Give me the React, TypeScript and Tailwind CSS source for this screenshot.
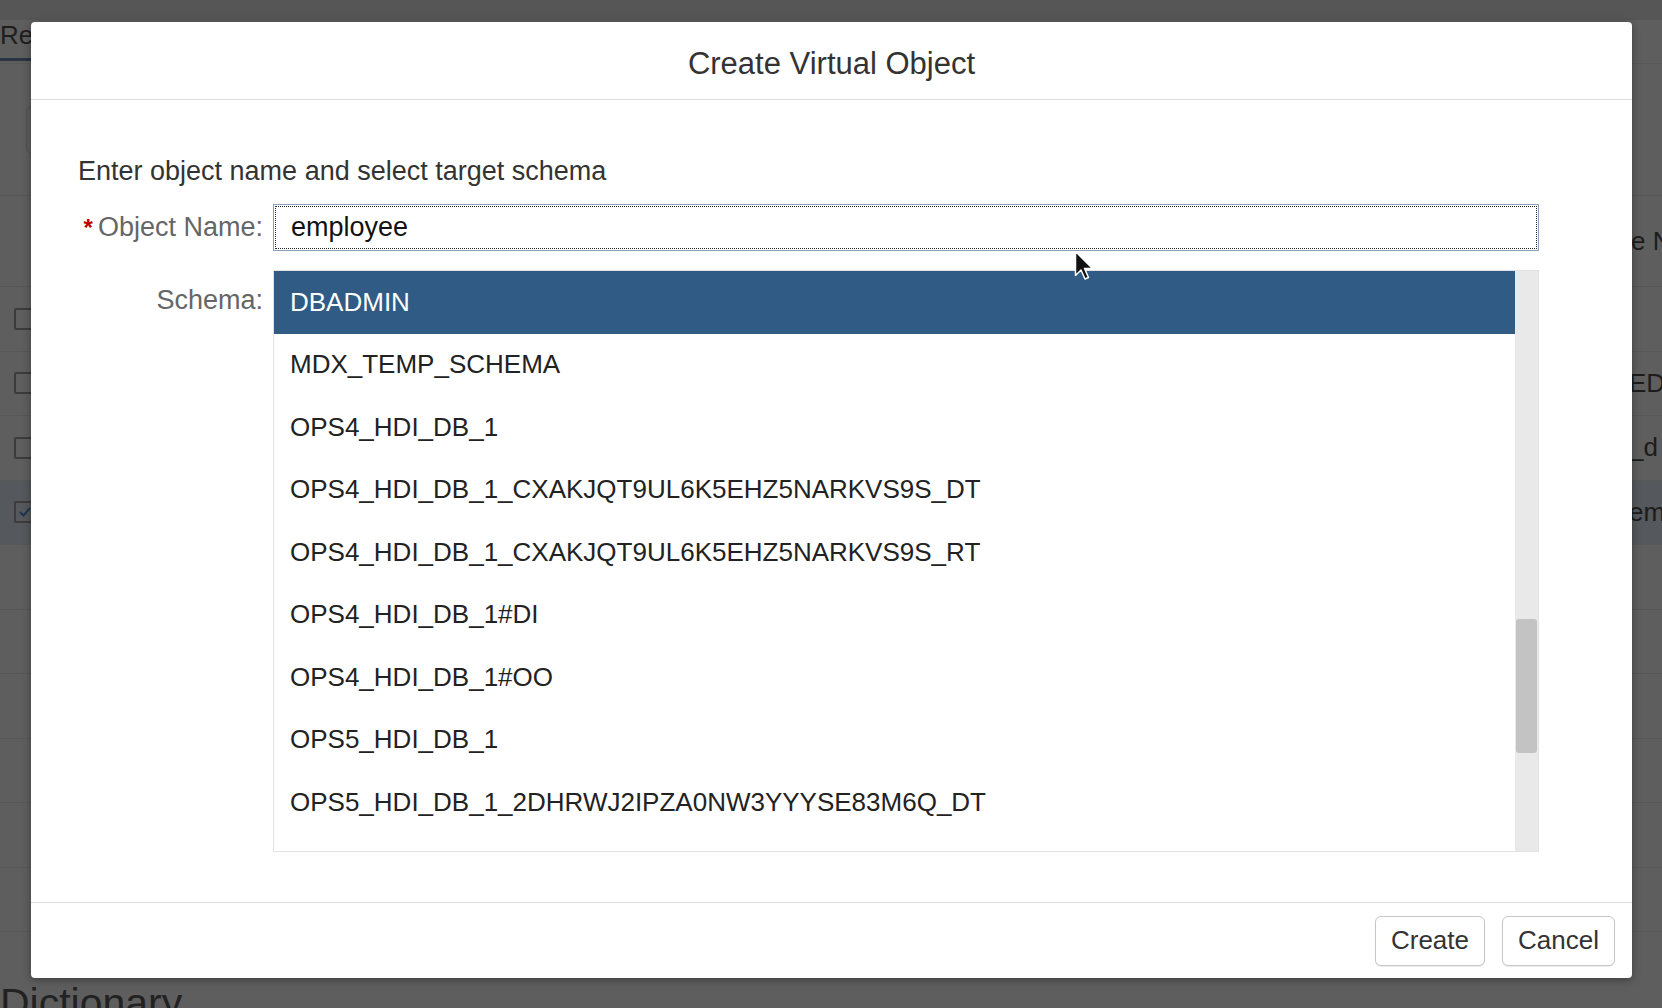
import { ReactNode } from 'react';

const schemas = [
  'DBADMIN',
  'MDX_TEMP_SCHEMA',
  'OPS4_HDI_DB_1',
  'OPS4_HDI_DB_1_CXAKJQT9UL6K5EHZ5NARKVS9S_DT',
  'OPS4_HDI_DB_1_CXAKJQT9UL6K5EHZ5NARKVS9S_RT',
  'OPS4_HDI_DB_1#DI',
  'OPS4_HDI_DB_1#OO',
  'OPS5_HDI_DB_1',
  'OPS5_HDI_DB_1_2DHRWJ2IPZA0NW3YYYSE83M6Q_DT',
  'OPS5_HDI_DB_1_2DHRWJ2IPZA0NW3YYYSE83M6Q_RT',
];

// rows of the table behind the overlay; only their edges show past the dialog
const rows = [
  { box: true, checked: false, tail: '', selected: false },
  { box: true, checked: false, tail: 'ED', selected: false },
  { box: true, checked: false, tail: '_d', selected: false },
  { box: true, checked: true, tail: 'em', selected: true },
  { box: false, checked: false, tail: '', selected: false },
  { box: false, checked: false, tail: '', selected: false },
  { box: false, checked: false, tail: '', selected: false },
  { box: false, checked: false, tail: '', selected: false },
  { box: false, checked: false, tail: '', selected: false },
  { box: false, checked: false, tail: '', selected: false },
];

function Checkbox({ checked }: { checked: boolean }) {
  return (
    <span className="ml-[14px] flex h-[22px] w-[22px] items-center justify-center rounded-[2px] border-2 border-[#3c3c3c]">
      {checked && (
        <svg width="14" height="14" viewBox="0 0 14 14" className="text-[#1f3550]">
          <path d="M2 7l3.5 3.5L12 3" fill="none" stroke="currentColor" strokeWidth="2" />
        </svg>
      )}
    </span>
  );
}

function Button({ children, w }: { children: ReactNode; w: string }) {
  return (
    <button className={`flex h-[50px] ${w} items-center justify-center rounded-[6px] border border-[#c6c6c6] bg-white text-[26px] text-[#333] shadow-[0_1px_1px_rgba(0,0,0,0.08)]`}>
      {children}
    </button>
  );
}

export default function App() {
  return (
    <div className="relative h-screen w-full overflow-hidden bg-[#5e5e5e] font-['Liberation_Sans',Arial,sans-serif] text-[#1c1c1c]">
      {/* page behind the modal overlay */}
      <div className="h-[20px] bg-[#565656]" />
      <div className="flex h-[44px] items-start border-b border-[#585858]">
        <span className="border-b-[3px] border-[#2a3442] pb-[8px] text-[26px] leading-[30px] text-[#1e1e1e]">Re</span>
      </div>
      <div className="flex h-[132px] flex-col justify-center border-b border-[#565656]">
        <div className="ml-[26px] h-[48px] w-[40px] rounded-[6px] border border-[#505050]" />
      </div>
      <div className="flex h-[91px] items-center justify-end border-b border-[#575757]">
        <span className="w-[31px] whitespace-nowrap text-[26px] text-[#1c1c1c]">e N</span>
      </div>
      {rows.map((r, i) => (
        <div key={i} className={`flex h-[64.5px] items-center justify-between border-b border-[#575757] ${r.selected ? 'bg-[#55585c]' : ''}`}>
          {r.box ? <Checkbox checked={r.checked} /> : <span />}
          <span className="w-[33px] whitespace-nowrap text-[26px] text-[#1c1c1c]">{r.tail}</span>
        </div>
      ))}
      <div className="absolute bottom-[-18px] left-0 text-[41px] leading-[46px] text-[#222]">Dictionary</div>

      {/* modal dialog */}
      <div className="absolute left-[31px] top-[22px] flex h-[956px] w-[1601px] flex-col rounded-[4px] bg-white shadow-[0_2px_8px_rgba(0,0,0,0.35)]">
        <div className="flex h-[78px] shrink-0 items-center justify-center border-b border-[#dcdcdc] pt-[7px]">
          <h1 className="text-[31px] text-[#333]">Create Virtual Object</h1>
        </div>

        <div className="flex-1 pl-[47px] pr-[93px] pt-[55px]">
          <p className="text-[27px] leading-[32px] text-[#333]">Enter object name and select target schema</p>
          <div className="mt-[17px] grid grid-cols-[185px_1fr] gap-x-[10px] gap-y-[19px]">
            <label className="flex h-[47px] items-center justify-end text-[27px] text-[#666]">
              <span className="mr-[5px] text-[24px] font-bold leading-none text-[#bb0000]">*</span>Object Name:
            </label>
            <div className="h-[47px] border border-[#8a9fb8] bg-white p-[1px]">
              <div className="flex h-full items-center border border-dotted border-[#222] px-[15px] text-[27px] text-[#111]">employee</div>
            </div>

            <label className="pt-[14px] text-right text-[27px] leading-[32px] text-[#666]">Schema:</label>
            <div className="flex h-[582px] overflow-hidden border border-[#e2e2e2]">
              <ul className="flex-1 overflow-hidden">
                {schemas.map((s, i) => (
                  <li
                    key={s}
                    className={`flex h-[62.5px] items-center px-[16px] text-[26px] ${i === 0 ? 'bg-[#305b85] text-white' : 'text-[#222]'}`}
                  >
                    {s}
                  </li>
                ))}
              </ul>
              <div className="w-[23px] shrink-0 bg-[#e9e9e9] px-[1px] pt-[348px]">
                <div className="h-[134px] rounded-[3px] bg-[#c3c3c3]" />
              </div>
            </div>
          </div>
        </div>

        <div className="flex h-[76px] shrink-0 items-center justify-end gap-[17px] border-t border-[#dcdcdc] pr-[17px]">
          <Button w="w-[110px]">Create</Button>
          <Button w="w-[113px]">Cancel</Button>
        </div>
      </div>

      {/* mouse pointer */}
      <svg className="absolute left-[1074px] top-[250px]" width="20" height="32" viewBox="0 0 20 32">
        <path d="M1.5 1.5v24l5.5-5.5 4 9 3.5-1.5-4-9h8z" fill="#111" stroke="#fff" strokeWidth="1.5" strokeLinejoin="round" />
      </svg>
    </div>
  );
}
